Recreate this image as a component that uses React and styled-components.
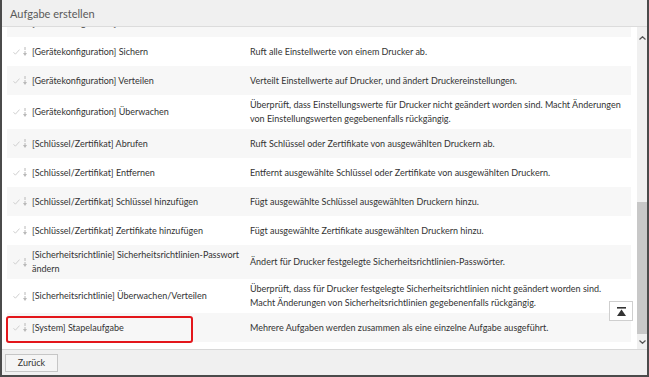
import React, { useLayoutEffect, useRef } from 'react';
import styled, { createGlobalStyle } from 'styled-components';

const GlobalStyle = createGlobalStyle`
  html, body { margin: 0; padding: 0; background: #fff; }
  body { font-family: 'Lato', 'Segoe UI', 'Liberation Sans', sans-serif; }
`;

const Frame = styled.div`
  width: 649px;
  height: 377px;
  box-sizing: border-box;
  border: 2px solid #4b4b4b;
  border-top: none;
  display: flex;
  flex-direction: column;
  background: #fff;
  overflow: hidden;
`;

const Header = styled.header`
  flex: none;
  height: 26px;
  display: flex;
  align-items: center;
  padding-left: 8px;
  background: #f0f0f0;
  border-bottom: 1px solid #dcdcdc;
  font-size: 11px;
  color: #5a5a5a;
`;

const Body = styled.div`
  flex: 1;
  min-height: 0;
  display: flex;
  position: relative;
`;

const List = styled.div`
  flex: 1;
  overflow: hidden;
  padding: 0 6px 8px 5px;
`;

const Row = styled.div`
  position: relative;
  display: grid;
  grid-template-columns: 243px 1fr;
  align-items: center;
  min-height: 29px;
  box-sizing: border-box;
  padding: 3px 0;
  background: ${p => (p.$shade ? '#f7f7f7' : '#fff')};
  font-size: 9px;
  line-height: 14px;
  color: #333;
`;

const NameCell = styled.div`
  display: flex;
  align-items: center;
  padding-left: 6px;
`;

const Icons = styled.span`
  display: flex;
  align-items: center;
  gap: 3px;
  margin-right: 5px;
  flex: none;
`;

const Desc = styled.div`
  padding-right: 4px;
`;

const Marker = styled.div`
  position: absolute;
  left: -1px;
  top: 3px;
  bottom: -1px;
  width: 187px;
  border: 2px solid #e3161b;
  border-radius: 3px;
  box-sizing: border-box;
  pointer-events: none;
`;

const Scrollbar = styled.div`
  flex: none;
  width: 10px;
  display: flex;
  flex-direction: column;
  background: #f0f0f0;
`;

const ScrollButton = styled.div`
  height: ${p => p.$h}px;
  display: flex;
  align-items: center;
  justify-content: center;
  flex: none;
`;

const Track = styled.div`
  flex: 1;
  display: flex;
  flex-direction: column;
`;

const Thumb = styled.div`
  margin-top: auto;
  height: 132px;
  background: #c8c8c8;
`;

const TopButton = styled.button`
  position: absolute;
  right: 14px;
  bottom: 28px;
  width: 24px;
  height: 20px;
  padding: 0;
  background: #fff;
  border: 1px solid #cfcfcf;
  display: flex;
  align-items: center;
  justify-content: center;
`;

const Footer = styled.footer`
  flex: none;
  height: 26px;
  box-sizing: border-box;
  display: flex;
  align-items: center;
  padding-left: 3px;
  background: #f0f0f0;
  border-top: 1px solid #d8d8d8;
`;

const BackButton = styled.button`
  width: 53px;
  height: 18px;
  padding: 0;
  background: #f5f5f5;
  border: 1px solid #c6c6c6;
  font-family: inherit;
  font-size: 9px;
  color: #333;
`;

const Check = () => (
  <svg width="7" height="6" viewBox="0 0 7 6">
    <polyline points="0.5,3.2 2.4,5.2 6.5,0.6" fill="none" stroke="#cfcfcf" strokeWidth="1" />
  </svg>
);

const Down = () => (
  <svg width="4" height="9" viewBox="0 0 4 9">
    <line x1="2" y1="0" x2="2" y2="3" stroke="#b8b8b8" strokeWidth="1" />
    <line x1="2" y1="4" x2="2" y2="6" stroke="#b8b8b8" strokeWidth="1" />
    <polygon points="0,6 4,6 2,9" fill="#b8b8b8" />
  </svg>
);

const Chevron = ({ up }) => (
  <svg width="7" height="4" viewBox="0 0 7 4">
    <polyline
      points={up ? '0.5,3.5 3.5,0.7 6.5,3.5' : '0.5,0.5 3.5,3.3 6.5,0.5'}
      fill="none"
      stroke="#555"
      strokeWidth="1.2"
    />
  </svg>
);

const tasks = [
  { name: ['[Gerätekonfiguration] Abrufen'], desc: ['Ruft Einstellwerte ab.'] },
  { name: ['[Gerätekonfiguration] Sichern'], desc: ['Ruft alle Einstellwerte von einem Drucker ab.'] },
  { name: ['[Gerätekonfiguration] Verteilen'], desc: ['Verteilt Einstellwerte auf Drucker, und ändert Druckereinstellungen.'] },
  {
    name: ['[Gerätekonfiguration] Überwachen'],
    desc: [
      'Überprüft, dass Einstellungswerte für Drucker nicht geändert worden sind. Macht Änderungen',
      'von Einstellungswerten gegebenenfalls rückgängig.',
    ],
  },
  { name: ['[Schlüssel/Zertifikat] Abrufen'], desc: ['Ruft Schlüssel oder Zertifikate von ausgewählten Druckern ab.'] },
  { name: ['[Schlüssel/Zertifikat] Entfernen'], desc: ['Entfernt ausgewählte Schlüssel oder Zertifikate von ausgewählten Druckern.'] },
  { name: ['[Schlüssel/Zertifikat] Schlüssel hinzufügen'], desc: ['Fügt ausgewählte Schlüssel ausgewählten Druckern hinzu.'] },
  { name: ['[Schlüssel/Zertifikat] Zertifikate hinzufügen'], desc: ['Fügt ausgewählte Zertifikate ausgewählten Druckern hinzu.'] },
  {
    name: ['[Sicherheitsrichtlinie] Sicherheitsrichtlinien-Passwort', 'ändern'],
    desc: ['Ändert für Drucker festgelegte Sicherheitsrichtlinien-Passwörter.'],
  },
  {
    name: ['[Sicherheitsrichtlinie] Überwachen/Verteilen'],
    desc: [
      'Überprüft, dass für Drucker festgelegte Sicherheitsrichtlinien nicht geändert worden sind.',
      'Macht Änderungen von Sicherheitsrichtlinien gegebenenfalls rückgängig.',
    ],
  },
  { name: ['[System] Stapelaufgabe'], desc: ['Mehrere Aufgaben werden zusammen als eine einzelne Aufgabe ausgeführt.'], marked: true },
];

const Lines = ({ lines }) =>
  lines.map((l, i) => (
    <React.Fragment key={i}>
      {i > 0 && <br />}
      {l}
    </React.Fragment>
  ));

export default function App() {
  const listRef = useRef(null);

  useLayoutEffect(() => {
    if (listRef.current) listRef.current.scrollTop = 19;
  }, []);

  return (
    <>
      <GlobalStyle />
      <Frame>
        <Header>Aufgabe erstellen</Header>
        <Body>
          <List ref={listRef}>
            {tasks.map((t, i) => (
              <Row key={i} $shade={i % 2 === 0}>
                <NameCell>
                  <Icons>
                    <Check />
                    <Down />
                  </Icons>
                  <span>
                    <Lines lines={t.name} />
                  </span>
                </NameCell>
                <Desc>
                  <Lines lines={t.desc} />
                </Desc>
                {t.marked && <Marker />}
              </Row>
            ))}
          </List>
          <Scrollbar>
            <ScrollButton $h={22}>
              <Chevron up />
            </ScrollButton>
            <Track>
              <Thumb />
            </Track>
            <ScrollButton $h={15}>
              <Chevron />
            </ScrollButton>
          </Scrollbar>
          <TopButton aria-label="Nach oben">
            <svg width="9" height="9" viewBox="0 0 9 9">
              <rect x="0" y="0" width="9" height="1.6" fill="#333" />
              <polygon points="4.5,2.4 9,9 0,9" fill="#333" />
            </svg>
          </TopButton>
        </Body>
        <Footer>
          <BackButton>Zurück</BackButton>
        </Footer>
      </Frame>
    </>
  );
}
